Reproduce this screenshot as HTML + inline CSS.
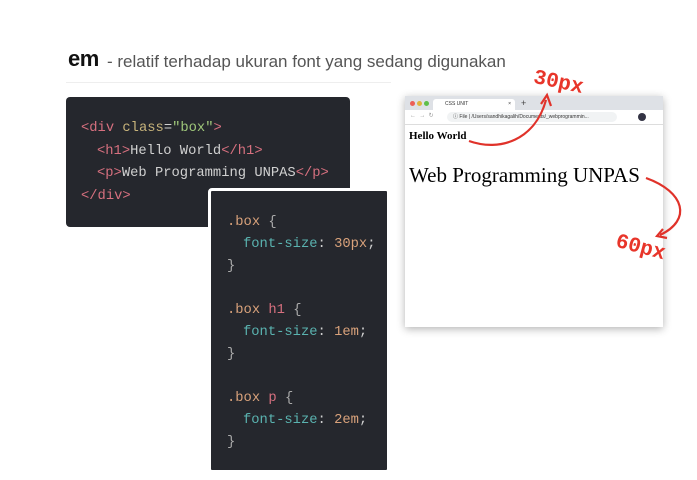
<!DOCTYPE html>
<html><head><style>
body{margin:0;width:697px;height:480px;background:#fff;position:relative;overflow:hidden;font-family:"Liberation Sans",sans-serif}
.abs{position:absolute}
.code{background:#25272d;border-radius:4px;font-family:"Liberation Mono",monospace;font-size:13.8px;color:#d0d0d0;white-space:pre}
.code div{position:absolute;left:0;height:22px;line-height:22px}
.t{color:#d7707f}.a{color:#c8b47b}.s{color:#9fc77a}.k{color:#d9a27b}.p{color:#5ab3b0}.n{color:#d9a27b}.g{color:#aaa}
.red{color:#e8352a;font-family:"Liberation Mono",monospace;font-weight:bold;font-size:21px}
</style></head><body>
<div class="abs" style="left:68px;top:46px;font-size:22px;font-weight:bold;color:#111;letter-spacing:-0.5px">em</div>
<div class="abs" style="left:107px;top:52px;font-size:17px;color:#555">- relatif terhadap ukuran font yang sedang digunakan</div>
<div class="abs" style="left:66px;top:82px;width:325px;height:1px;background:#eee"></div>

<div class="abs code" style="left:66px;top:97px;width:284px;height:130px">
<div style="left:15px;top:21px"><span class="t">&lt;div</span> <span class="a">class</span>=<span class="s">"box"</span><span class="t">&gt;</span></div>
<div style="left:31px;top:44px"><span class="t">&lt;h1&gt;</span>Hello World<span class="t">&lt;/h1&gt;</span></div>
<div style="left:31px;top:66px"><span class="t">&lt;p&gt;</span>Web Programming UNPAS<span class="t">&lt;/p&gt;</span></div>
<div style="left:15px;top:89px"><span class="t">&lt;/div&gt;</span></div>
</div>

<div class="abs code" style="left:208px;top:188px;width:176px;height:279px;border:3px solid #fff">
<div style="left:16px;top:21px"><span class="k">.box</span> <span class="g">{</span></div>
<div style="left:32px;top:43px"><span class="p">font-size</span>: <span class="n">30px</span>;</div>
<div style="left:16px;top:65px"><span class="g">}</span></div>
<div style="left:16px;top:109px"><span class="k">.box</span> <span class="t">h1</span> <span class="g">{</span></div>
<div style="left:32px;top:131px"><span class="p">font-size</span>: <span class="n">1em</span>;</div>
<div style="left:16px;top:153px"><span class="g">}</span></div>
<div style="left:16px;top:197px"><span class="k">.box</span> <span class="t">p</span> <span class="g">{</span></div>
<div style="left:32px;top:219px"><span class="p">font-size</span>: <span class="n">2em</span>;</div>
<div style="left:16px;top:241px"><span class="g">}</span></div>
</div>

<div class="abs" style="left:405px;top:96px;width:258px;height:231px;background:#fff;box-shadow:0 2px 8px rgba(0,0,0,.3)">
<div class="abs" style="left:0;top:0;width:258px;height:14px;background:#dee1e6"></div>
<div class="abs" style="left:5px;top:5px;width:5px;height:5px;border-radius:50%;background:#ec5f57"></div>
<div class="abs" style="left:12px;top:5px;width:5px;height:5px;border-radius:50%;background:#e0b43d"></div>
<div class="abs" style="left:19px;top:5px;width:5px;height:5px;border-radius:50%;background:#5fbf4a"></div>
<div class="abs" style="left:28px;top:3px;width:82px;height:11px;background:#fff;border-radius:3px 3px 0 0;font-size:5px;line-height:11px;color:#333;padding-left:12px;box-sizing:border-box">CSS UNIT<span style="float:right;margin-right:4px">×</span></div>
<div class="abs" style="left:116px;top:2px;font-size:9px;color:#444">+</div>
<div class="abs" style="left:0;top:14px;width:258px;height:14px;background:#fff;border-bottom:1px solid #ddd"></div>
<div class="abs" style="left:5px;top:16px;font-size:6px;color:#999">←&nbsp; → &nbsp;↻</div>
<div class="abs" style="left:42px;top:16px;width:170px;height:10px;background:#f1f3f4;border-radius:5px;font-size:5px;line-height:10px;color:#333;padding-left:6px;box-sizing:border-box;white-space:nowrap;overflow:hidden">ⓘ File | /Users/sandhikagalih/Documents/_webprogrammin...</div>
<div class="abs" style="left:233px;top:17px;width:8px;height:8px;border-radius:50%;background:#334"></div>
<div class="abs" style="left:4px;top:34px;font-family:'Liberation Serif',serif;font-weight:bold;font-size:11px;color:#000">Hello World</div>
<div class="abs" style="left:4px;top:67px;font-family:'Liberation Serif',serif;font-size:21px;color:#000;white-space:nowrap">Web Programming UNPAS</div>
</div>

<div class="abs red" style="left:533px;top:72px;transform:rotate(12deg)">30px</div>
<div class="abs red" style="left:615px;top:237px;transform:rotate(15deg)">60px</div>
<svg class="abs" style="left:0;top:0" width="697" height="480">
<path d="M469 141 C500 152 535 140 546 100" stroke="#e0322a" stroke-width="2.2" fill="none"/>
<path d="M541 104 L547 95 L551 106" stroke="#e0322a" stroke-width="2.2" fill="none"/>
<path d="M646 178 C685 192 692 220 660 235" stroke="#e0322a" stroke-width="2.2" fill="none"/>
<path d="M663 229 L657 236 L667 238" stroke="#e0322a" stroke-width="2.2" fill="none"/>
</svg>
</body></html>
